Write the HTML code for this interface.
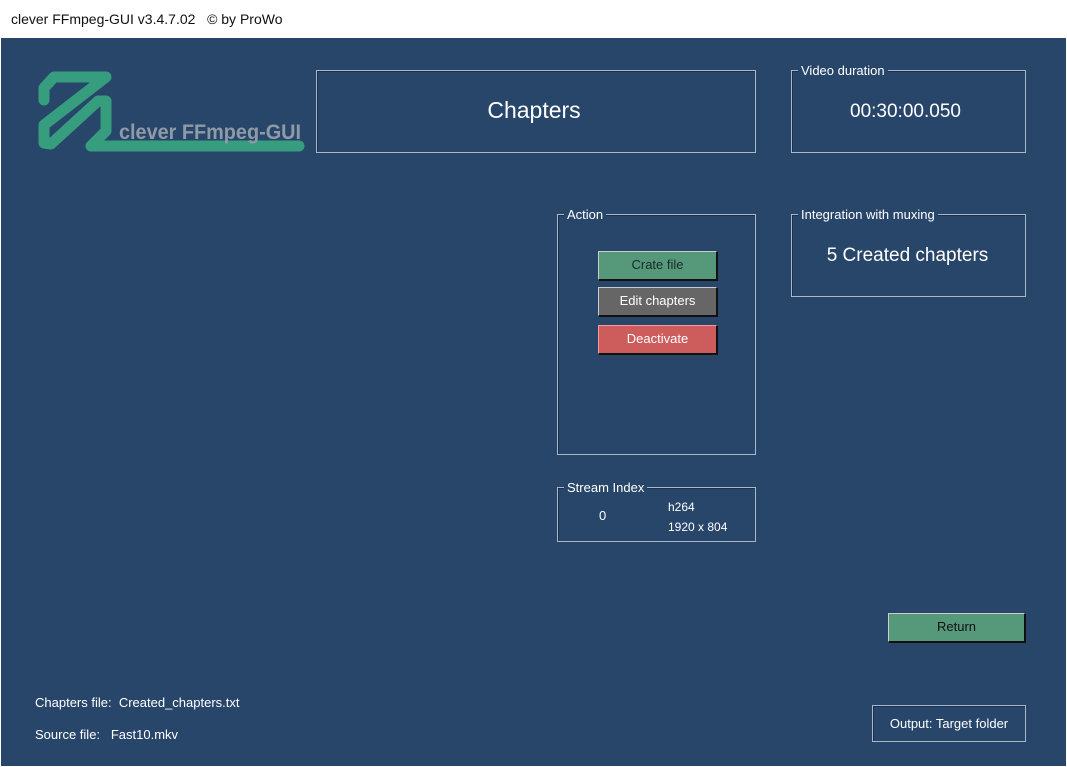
<!DOCTYPE html>
<html><head><style>
*{margin:0;padding:0;box-sizing:border-box}
body{width:1067px;height:767px;background:#fff;font-family:"Liberation Sans",sans-serif;overflow:hidden;position:relative}
#tb{position:absolute;left:0;top:0;width:1067px;height:38px;background:#fff;font-size:14px;color:#111;padding:11px 0 0 11px}
#main{position:absolute;left:1px;top:38px;width:1065px;height:728px;background:#27466a}
.box{position:absolute;border:1px solid #a9b8c9;box-shadow:inset 1px 1px 0 #1a3050}
.lbl{position:absolute;top:-8px;left:6px;background:#27466a;color:#fff;font-size:13px;padding:0 3px}
.t{position:absolute;color:#fff;font-size:13px}
.btn{position:absolute;width:119px;height:29px;border:1px solid #ccc;border-right-color:#111;border-bottom-color:#111;font-size:13px;text-align:center;line-height:26px;box-shadow:1px 1px 0 #111}
</style></head><body>
<div id="tb">clever FFmpeg-GUI v3.4.7.02 &nbsp;&nbsp;© by ProWo</div>
<div id="main">
<svg style="position:absolute;left:34px;top:32px" width="272" height="86" viewBox="34 70 272 86">
<g fill="none" stroke="#379d7f" stroke-width="11" stroke-linejoin="round" stroke-linecap="round">
<path d="M43,100 L43,88 L53,77 L105,77 L43,125 L43,143 L50,144 L97,101 L105,101 L105,131 L90,146 L298,146"/>
</g>
<text x="118" y="139" fill="#8e9aa6" font-size="21" font-weight="bold" textLength="182" lengthAdjust="spacingAndGlyphs" font-family="Liberation Sans,sans-serif">clever FFmpeg-GUI</text>
</svg>
<div class="box" style="left:315px;top:32px;width:440px;height:83px"><div style="color:#fff;font-size:23px;text-align:center;margin-top:26px;margin-left:-4px">Chapters</div></div>
<div class="box" style="left:790px;top:32px;width:235px;height:83px"><span class="lbl">Video duration</span><div style="color:#fff;font-size:19px;text-align:center;margin-top:30px;margin-left:-6px">00:30:00.050</div></div>
<div class="box" style="left:556px;top:176px;width:199px;height:241px"><span class="lbl">Action</span></div>
<div class="btn" style="left:597px;top:213px;background:#55987a;color:#1a2a2a">Crate file</div>
<div class="btn" style="left:597px;top:249px;background:#666;color:#fff">Edit chapters</div>
<div class="btn" style="left:597px;top:287px;background:#cd5c5c;color:#fff;border-color:#f99 #111 #111 #f99">Deactivate</div>
<div class="box" style="left:790px;top:176px;width:235px;height:83px"><span class="lbl">Integration with muxing</span><div style="color:#fff;font-size:19px;text-align:center;margin-top:30px;margin-left:-2px">5 Created chapters</div></div>
<div class="box" style="left:556px;top:449px;width:199px;height:55px"><span class="lbl">Stream Index</span>
<span class="t" style="left:41px;top:20px">0</span><span class="t" style="left:110px;top:12px;font-size:12px">h264</span><span class="t" style="left:110px;top:32px;font-size:12px">1920 x 804</span></div>
<div class="btn" style="left:887px;top:575px;width:137px;background:#55987a;color:#111">Return</div>
<span class="t" style="left:34px;top:657px">Chapters file:&nbsp; Created_chapters.txt</span>
<span class="t" style="left:34px;top:689px">Source file:&nbsp;&nbsp; Fast10.mkv</span>
<div class="box" style="left:871px;top:667px;width:154px;height:37px;color:#fff;font-size:13px;text-align:center;line-height:35px">Output: Target folder</div>
</div>
</body></html>
